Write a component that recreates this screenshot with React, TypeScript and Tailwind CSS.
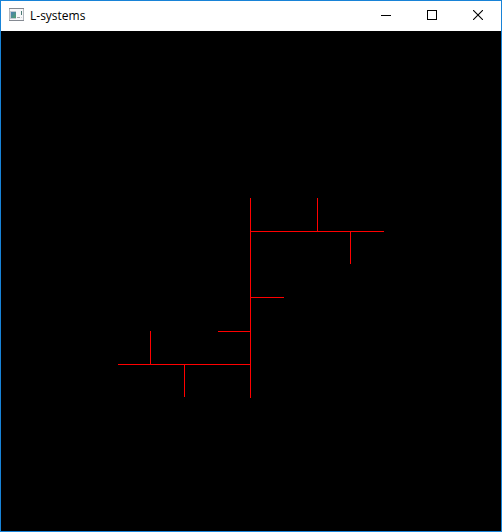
type Segment = { x: number; y: number; length: number; vertical?: boolean };

const segments: Segment[] = [
  { x: 249, y: 167, length: 200, vertical: true },
  { x: 249, y: 200, length: 134 },
  { x: 316, y: 167, length: 34, vertical: true },
  { x: 349, y: 200, length: 33, vertical: true },
  { x: 249, y: 266, length: 34 },
  { x: 217, y: 300, length: 33 },
  { x: 117, y: 333, length: 133 },
  { x: 149, y: 300, length: 34, vertical: true },
  { x: 183, y: 333, length: 33, vertical: true },
];

function AppIcon() {
  return (
    <svg className="h-4 w-4" viewBox="0 0 16 16" shapeRendering="crispEdges" aria-hidden="true">
      <defs>
        <linearGradient id="screen" x1="0" y1="0" x2="1" y2="1">
          <stop offset="0" stopColor="#4a7fb5" />
          <stop offset="1" stopColor="#4fa06c" />
        </linearGradient>
      </defs>
      <rect x="0" y="0" width="15" height="13" fill="#b4b8be" />
      <rect x="0" y="0" width="15" height="1" fill="#858a92" />
      <rect x="0" y="12" width="15" height="1" fill="#858a92" />
      <rect x="1" y="1" width="13" height="11" fill="#f7f7f9" />
      <rect x="1" y="3" width="6" height="8" fill="#c3c9d2" />
      <rect x="2" y="4" width="5" height="6" fill="url(#screen)" />
      <rect x="8" y="9" width="3" height="1" fill="#9fa4aa" />
      <rect x="12" y="3" width="1" height="4" fill="#4c7a74" />
      <rect x="12" y="9" width="1" height="1" fill="#d5d8dc" />
    </svg>
  );
}

const controlClass = "flex h-full w-[46px] items-center justify-center pb-0.5 hover:bg-gray-200";

export default function App() {
  return (
    <main className="border border-[#1883d7] bg-black">
      <header className="flex h-[30px] items-center bg-white pl-2">
        <AppIcon />
        <h1 className="ml-[5px] grow font-['Open_Sans','Noto_Sans',sans-serif] text-[12px] leading-4 text-black">
          L-systems
        </h1>
        <button type="button" aria-label="Minimize" className={controlClass}>
          <svg className="h-[10px] w-[10px]" viewBox="0 0 10 10" shapeRendering="crispEdges">
            <rect x="0" y="5" width="10" height="1" />
          </svg>
        </button>
        <button type="button" aria-label="Maximize" className={controlClass}>
          <svg className="h-[10px] w-[10px]" viewBox="0 0 10 10" shapeRendering="crispEdges">
            <rect x="0.5" y="0.5" width="9" height="9" fill="none" stroke="black" />
          </svg>
        </button>
        <button type="button" aria-label="Close" className={controlClass}>
          <svg className="h-[10px] w-[10px]" viewBox="0 0 10 10">
            <path d="M0 0l10 10M10 0l-10 10" fill="none" stroke="black" strokeWidth="1.1" />
          </svg>
        </button>
      </header>
      <svg
        className="block w-full"
        viewBox="0 0 500 500"
        shapeRendering="crispEdges"
        fill="#ff0000"
        role="img"
        aria-label="L-system drawing"
      >
        {segments.map((s) => (
          <rect
            key={`${s.x}-${s.y}-${s.vertical ? "v" : "h"}`}
            x={s.x}
            y={s.y}
            width={s.vertical ? 1 : s.length}
            height={s.vertical ? s.length : 1}
          />
        ))}
      </svg>
    </main>
  );
}
